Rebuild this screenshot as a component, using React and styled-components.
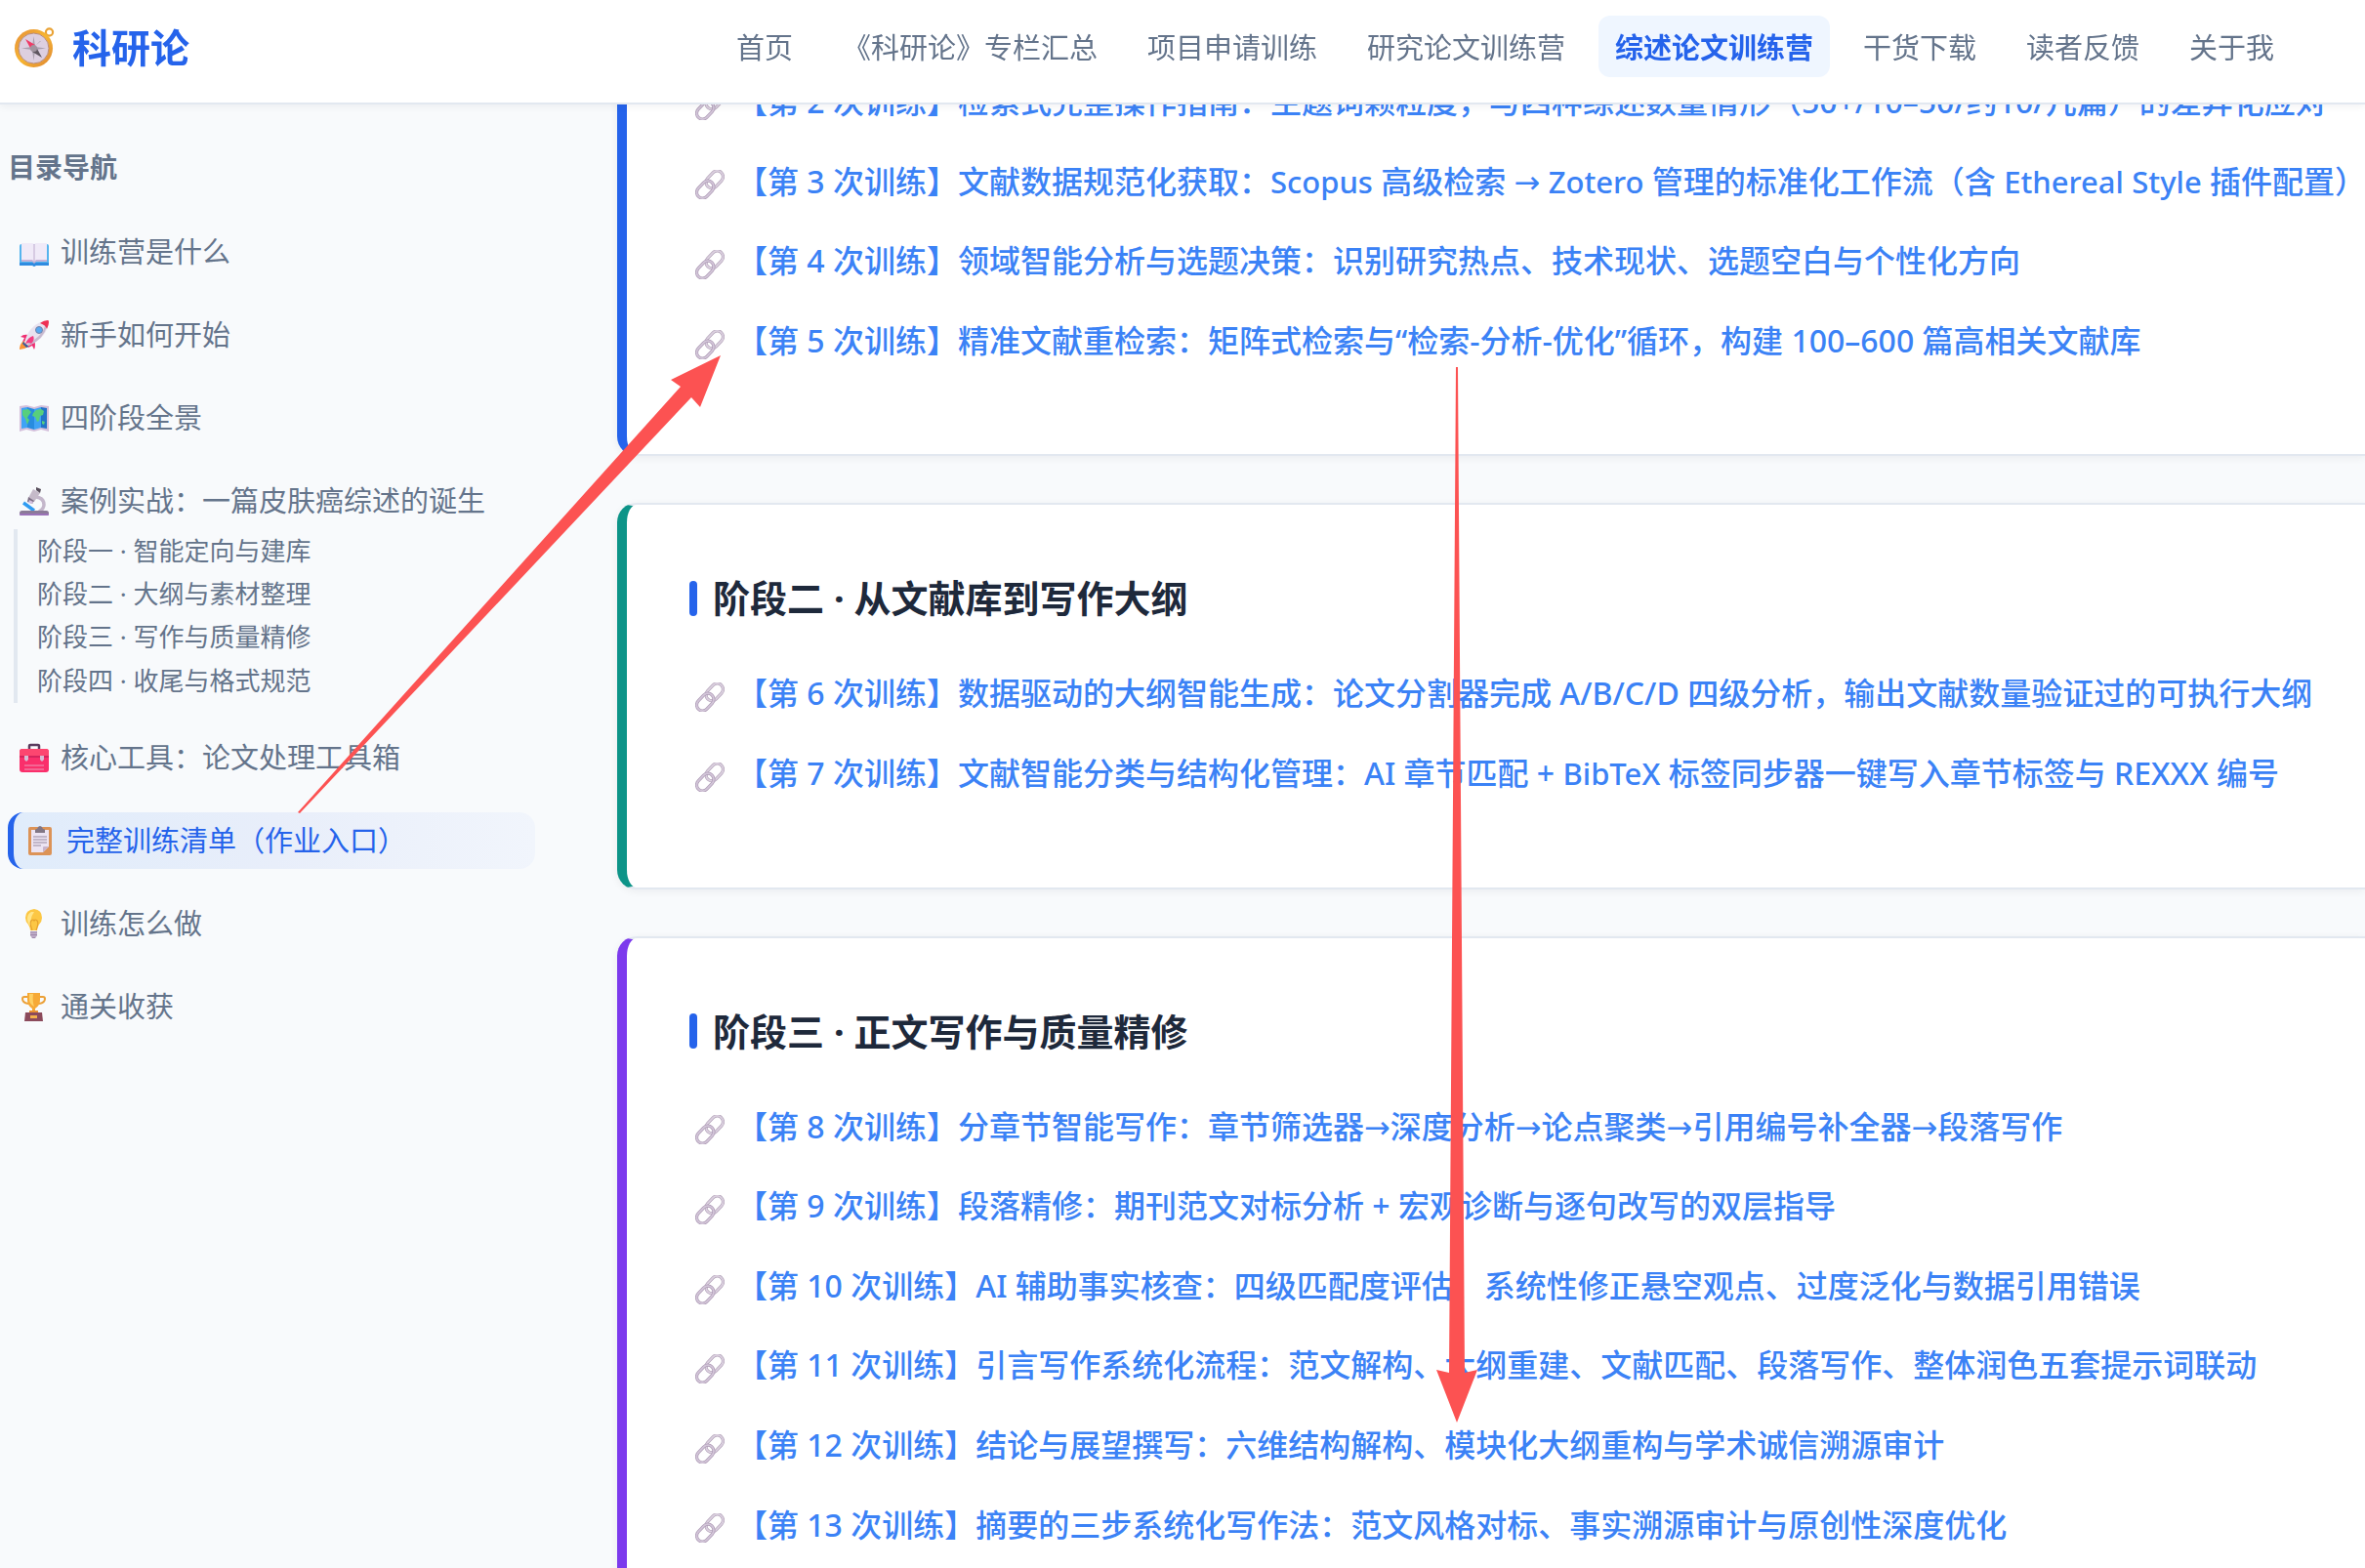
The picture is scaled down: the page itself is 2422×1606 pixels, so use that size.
import React from 'react';
import styled, { createGlobalStyle } from 'styled-components';

const GlobalStyle = createGlobalStyle`
  * {
    box-sizing: border-box;
  }

  body {
    margin: 0;
    background-color: #f8fafc;
    color: #64748b;
    font-family: 'Noto Sans', 'Noto Sans CJK SC', sans-serif;
  }

  a {
    color: inherit;
    text-decoration: none;
  }

  ul {
    list-style: none;
    margin: 0;
    padding: 0;
  }
`;

const Page = styled.div`
  position: relative;
  height: 100vh;
  overflow: hidden;
`;

const Header = styled.header`
  position: fixed;
  top: 0;
  left: 0;
  right: 0;
  z-index: 10;
  display: flex;
  justify-content: space-between;
  align-items: center;
  padding: 16px 76px 26px 14px;
  background-color: white;
  border-bottom: 2px solid #e2e8f0;
  box-shadow: 0 2px 8px rgba(15, 23, 42, 0.06);
`;

const Logo = styled.a`
  display: flex;
  align-items: center;
  gap: 18px;
  padding-top: 2px;
  font-size: 40px;
  line-height: 60px;
  font-weight: 700;
  color: #2563eb;
`;

const Nav = styled.nav`
  display: flex;
  gap: 17px;
`;

const NavLink = styled.a`
  padding: 9px 17px 7px;
  border-radius: 12px;
  font-size: 29px;
  line-height: 47px;
  font-weight: ${props => (props.$active ? 700 : 400)};
  color: ${props => (props.$active ? '#2563eb' : '#64748b')};
  background-color: ${props => (props.$active ? '#eff6ff' : 'transparent')};
`;

const Layout = styled.div`
  display: flex;
  align-items: flex-start;
  gap: 84px;
`;

const Sidebar = styled.aside`
  flex: 0 0 548px;
  padding: 147px 0 0 8px;
`;

const SidebarTitle = styled.h2`
  margin: 0 0 34px;
  font-size: 28px;
  line-height: 48px;
  font-weight: 700;
`;

const TocItem = styled.li`
  margin-bottom: 27px;
`;

const TocLink = styled.a`
  display: flex;
  align-items: center;
  gap: 12px;
  padding: 0 12px;
  font-size: 29px;
  line-height: 58px;
  border-radius: 16px;
  ${props => props.$active && `
    color: #2563eb;
    border-left: 6px solid #2563eb;
    background: linear-gradient(90deg, #e0ecfb, #e8eefa 50%, #f1f5fc);
  `}
`;

const SubList = styled.ul`
  margin-left: 6px;
  padding: 0 0 1px 20px;
  border-left: 4px solid #e2e8f0;
`;

const SubLink = styled.a`
  display: block;
  font-size: 26px;
  line-height: 1.7;
`;

const Main = styled.main`
  flex: 1;
  min-width: 0;
  display: flex;
  flex-direction: column;
  gap: 48px;
`;

const Card = styled.section`
  padding: ${props => (props.$continued ? '62px' : '64px')} 0 64px 64px;
  background-color: white;
  border: 2px solid #e2e8f0;
  border-left: 10px solid ${props => props.$accent};
  border-right: 0;
  border-radius: 20px 0 0 20px;
  box-shadow: 0 2px 8px rgba(15, 23, 42, 0.06);
`;

const CardTitle = styled.h3`
  display: flex;
  align-items: center;
  gap: 16px;
  margin: 0 0 26px;
  font-size: 38px;
  line-height: 63px;
  font-weight: 700;
  color: #1e293b;

  &::before {
    content: '';
    width: 8px;
    height: 36px;
    border-radius: 4px;
    background-color: #2563eb;
  }
`;

const TrainingList = styled.ul`
  margin-bottom: 11px;
`;

const TrainingItem = styled.li`
  display: flex;
  align-items: center;
  gap: 12px;
  padding: 11px 0 11px 6px;
  font-size: 32px;
  line-height: 1.8;
  white-space: nowrap;
`;

const TrainingLink = styled.a`
  padding-bottom: 2px;
  font-weight: 500;
  color: #3b82f6;
`;

const Arrow = styled.span`
  font-family: 'DejaVu Sans', sans-serif;
  font-weight: 400;
  line-height: 1;
`;

const Latin = styled.span`
  font-size: 31px;
  line-height: 1;
`;

const Icon = styled.svg`
  flex: none;
  width: ${props => props.$size || 30}px;
  height: ${props => props.$size || 30}px;
`;

const LinkMark = styled(Icon)`
  margin-top: 6px;
`;

const Annotations = styled.svg`
  position: absolute;
  top: 0;
  left: 0;
  z-index: 20;
  width: 2422px;
  height: 1606px;
  pointer-events: none;
`;

const CompassIcon = () => (
  <Icon $size={42} viewBox="0 0 42 42" aria-hidden="true">
    <defs>
      <linearGradient id="rim" x1="0" y1="0" x2="1" y2="1">
        <stop offset="0" stopColor="#e58f3a" />
        <stop offset="0.5" stopColor="#f7b531" />
        <stop offset="1" stopColor="#dd8433" />
      </linearGradient>
    </defs>
    <circle cx="36.500" cy="5" r="3.600" fill="none" stroke="#e9a336" strokeWidth="2.200" />
    <circle cx="20.500" cy="21.500" r="19.500" fill="url(#rim)" />
    <circle cx="20.500" cy="21.500" r="15.500" fill="#ddcfe0" stroke="#b98a78" strokeWidth="1" />
    <path d="M20.500 9l1.500 11 11 1.500-11 1.500-1.500 11-1.500-11-11-1.500 11-1.500z" fill="#a99fad" />
    <path d="M28 14l-6 5 5-5zM13 29l5-6-5 6z" fill="#a99fad" />
    <path d="M12 12l10 6-4 5z" fill="#ef3a66" />
    <path d="M29 31l-10-6 4-5z" fill="#5f5660" />
    <circle cx="20.500" cy="21.500" r="3.500" fill="#a0949f" />
  </Icon>
);

const BookIcon = () => (
  <Icon viewBox="0 0 30 30" aria-hidden="true">
    <path d="M0 9q0-2 2-2h26q2 0 2 2v19H17l-2 2-2-2H0z" fill="#55b4ee" />
    <path d="M0 26h30v3H17l-2 1-2-1H0z" fill="#2f8be0" />
    <path d="M2 6h11q2 0 2 2v18q0-2-2-2H2zM28 6H17q-2 0-2 2v18q0-2 2-2h11z" fill="#f0eaf8" />
    <path d="M2 23h11l2 2 2-2h11v2H17l-2 2-2-2H2z" fill="#c5b2d8" />
    <path d="M15 7v18" stroke="#cfc0dd" strokeWidth="1.500" />
  </Icon>
);

const RocketIcon = () => (
  <Icon viewBox="0 0 30 30" aria-hidden="true">
    <path d="M3 22q3-2 6 0t0 5q-4 3-9 3 0-5 3-8z" fill="#fb9436" />
    <path d="M4 22l6 5-3 1-4-4z" fill="#3f5a9c" />
    <path d="M9 15q-5-1-8 2l4 1-2 4 6-2zM15 21q2 4 0 9l-2-4-4 2 1-6z" fill="#ef2f72" />
    <path d="M5 23Q9 6 24 1l5 5q-3 13-20 20z" fill="#e9e2ef" />
    <path d="M28 6q-3 13-18 20l-2-2q15-7 18-18z" fill="#c8bacf" />
    <path d="M21 3q4-3 8-3 1 0 1 2 0 3-2 7-1-4-7-6z" fill="#ee3054" />
    <path d="M14 16q-5 1-8 8l4-1 2 1q4-4 2-8z" fill="#f43c82" />
    <circle cx="20" cy="10" r="3.500" fill="#58a9f0" stroke="#7582a8" strokeWidth="1" />
  </Icon>
);

const MapIcon = () => (
  <Icon viewBox="0 0 30 30" aria-hidden="true">
    <path d="M0 3l7-1 8 2 7-2 8 1v26l-8-2-7 2-8-2-7 2z" fill="#d4bfdb" />
    <path d="M2 5l6-1v21l-6 1z" fill="#3fa3f5" />
    <path d="M8 4l7 2v21l-7-2z" fill="#278cdf" />
    <path d="M15 6l7-2v21l-7 2z" fill="#3fa3f5" />
    <path d="M22 4l6 1v21l-6-1z" fill="#2374c8" />
    <path d="M3 7l6-1 3 3-3 4-1 2 2 2-2 5-2-6-3-4zM14 10l3-3 5-1 3 2-1 4-3 1-1 5-2 1-2-5-3-1zM23 18l3 1-1 3-2-1z" fill="#57cf7d" />
  </Icon>
);

const MicroscopeIcon = () => (
  <Icon viewBox="0 0 30 30" aria-hidden="true">
    <path d="M17 11q8 1 8 8 0 4-5 7" fill="none" stroke="#c4b7cb" strokeWidth="3.500" />
    <path d="M4 17l11 8" stroke="#2f9cf2" strokeWidth="3.500" />
    <rect x="0" y="25" width="30" height="5" rx="2.500" fill="#8b7a98" />
    <rect x="0" y="28" width="30" height="2" rx="1" fill="#9b72b8" />
    <path d="M14 3l7 4-6 9-6-4z" fill="#c5bac9" />
    <path d="M9 11l6 4-2 3-5-2z" fill="#7b6d84" />
    <path d="M10 14l4 2-1 2-4-1z" fill="#d3c0e0" />
    <path d="M17 1l5 2-1 4-4-3z" fill="#574e5b" />
  </Icon>
);

const ToolboxIcon = () => (
  <Icon viewBox="0 0 30 30" aria-hidden="true">
    <path d="M10 6V3q0-1 1-1h8q1 0 1 1v3" fill="none" stroke="#5b3b5e" strokeWidth="2.500" />
    <rect x="0" y="6" width="30" height="24" rx="3" fill="#fa2f6b" />
    <path d="M0 13V9q0-3 3-3h24q3 0 3 3v4z" fill="#fd4670" />
    <path d="M0 14h30" stroke="#c92258" strokeWidth="1.500" />
    <path d="M5 13h4v4l-2 2-2-2zM21 13h4v4l-2 2-2-2z" fill="#d7bdd5" />
    <path d="M5 23h20M5 27h20" stroke="#ee9bbb" strokeWidth="1.200" />
  </Icon>
);

const ClipboardIcon = () => (
  <Icon viewBox="0 0 30 30" aria-hidden="true">
    <rect x="3" y="1" width="24" height="29" rx="2" fill="#dc9357" />
    <path d="M6 4h18v17l-6 6H6z" fill="#ece4f3" />
    <path d="M24 21l-6 6v-5q0-1 1-1z" fill="#c8b3cc" />
    <path d="M10 7V4q0-1 2-1 1-3 3-3t3 3q2 0 2 1v3z" fill="#817685" />
    <path d="M8 11h14M8 14h14M8 17h14M8 20h8" stroke="#97889e" strokeWidth="1" />
  </Icon>
);

const BulbIcon = () => (
  <Icon viewBox="0 0 30 30" aria-hidden="true">
    <path d="M15 0q8 1 8 9 0 4-3 7-2 3-2 6h-7q0-3-2-6-3-3-3-7 0-8 9-9z" fill="#fcc744" />
    <path d="M12 3q-4 2-4 7t4 8q-2-8 3-15z" fill="#ffe589" />
    <path d="M13 22q-3-8-1-10t3 0q1-2 3 0t-1 10" fill="none" stroke="#e6a12c" strokeWidth="1.200" />
    <path d="M11 23h7v4l-2 3h-3l-2-3z" fill="#a18cad" />
    <path d="M11 25h7M12 28h5" stroke="#d7c6de" strokeWidth="1" />
  </Icon>
);

const TrophyIcon = () => (
  <Icon viewBox="0 0 30 30" aria-hidden="true">
    <path d="M8 5H5q-2 0-2 2 0 4 6 5M21 5h3q2 0 2 2 0 4-6 5" fill="none" stroke="#eba037" strokeWidth="2" />
    <path d="M8 1h13v7q0 6-5 9v4h-3v-4Q8 14 8 8z" fill="#f6a936" />
    <path d="M10 2h4q-1 8 1 13-5-3-5-7z" fill="#fed064" />
    <path d="M10 19h9v3h-9z" fill="#e99131" />
    <path d="M6 21h17l1 9H5z" fill="#8b4a5b" />
    <rect x="11" y="24" width="7" height="3" fill="#f4b04b" />
  </Icon>
);

const LinkIcon = () => (
  <LinkMark viewBox="0 0 30 30" aria-hidden="true">
    <g fill="none" transform="rotate(-47 15 15)">
      <rect x="12" y="9" width="20" height="12" rx="6" stroke="#b3a3b9" strokeWidth="3.200" />
      <rect x="12" y="9" width="20" height="12" rx="6" stroke="#dcd1e0" strokeWidth="1.800" />
      <rect x="-2" y="9" width="20" height="12" rx="6" stroke="#ad9ab5" strokeWidth="3.200" />
      <rect x="-2" y="9" width="20" height="12" rx="6" stroke="#d3c6d9" strokeWidth="1.800" />
    </g>
  </LinkMark>
);

const navItems = [
  '首页',
  '《科研论》专栏汇总',
  '项目申请训练',
  '研究论文训练营',
  '综述论文训练营',
  '干货下载',
  '读者反馈',
  '关于我',
];

const tocItems = [
  { label: '训练营是什么', icon: BookIcon },
  { label: '新手如何开始', icon: RocketIcon },
  { label: '四阶段全景', icon: MapIcon },
  {
    label: '案例实战：一篇皮肤癌综述的诞生',
    icon: MicroscopeIcon,
    children: [
      '阶段一 · 智能定向与建库',
      '阶段二 · 大纲与素材整理',
      '阶段三 · 写作与质量精修',
      '阶段四 · 收尾与格式规范',
    ],
  },
  { label: '核心工具：论文处理工具箱', icon: ToolboxIcon },
  { label: '完整训练清单（作业入口）', icon: ClipboardIcon, active: true },
  { label: '训练怎么做', icon: BulbIcon },
  { label: '通关收获', icon: TrophyIcon },
];

const stages = [
  {
    accent: '#2563eb',
    items: [
      '【第 2 次训练】检索式完整操作指南：主题词颗粒度，与四种综述数量情形（50+/10–50/约10/几篇）的差异化应对',
      '【第 3 次训练】文献数据规范化获取：Scopus 高级检索 → Zotero 管理的标准化工作流（含 Ethereal Style 插件配置）',
      '【第 4 次训练】领域智能分析与选题决策：识别研究热点、技术现状、选题空白与个性化方向',
      '【第 5 次训练】精准文献重检索：矩阵式检索与“检索-分析-优化”循环，构建 100–600 篇高相关文献库',
    ],
  },
  {
    title: '阶段二 · 从文献库到写作大纲',
    accent: '#0d9488',
    items: [
      '【第 6 次训练】数据驱动的大纲智能生成：论文分割器完成 A/B/C/D 四级分析，输出文献数量验证过的可执行大纲',
      '【第 7 次训练】文献智能分类与结构化管理：AI 章节匹配 + BibTeX 标签同步器一键写入章节标签与 REXXX 编号',
    ],
  },
  {
    title: '阶段三 · 正文写作与质量精修',
    accent: '#7c3aed',
    items: [
      '【第 8 次训练】分章节智能写作：章节筛选器→深度分析→论点聚类→引用编号补全器→段落写作',
      '【第 9 次训练】段落精修：期刊范文对标分析 + 宏观诊断与逐句改写的双层指导',
      '【第 10 次训练】AI 辅助事实核查：四级匹配度评估、系统性修正悬空观点、过度泛化与数据引用错误',
      '【第 11 次训练】引言写作系统化流程：范文解构、大纲重建、文献匹配、段落写作、整体润色五套提示词联动',
      '【第 12 次训练】结论与展望撰写：六维结构解构、模块化大纲重构与学术诚信溯源审计',
      '【第 13 次训练】摘要的三步系统化写作法：范文风格对标、事实溯源审计与原创性深度优化',
    ],
  },
];

// Noto's arrow and lowercase words are large next to the Chinese text,
// so arrows get their own face and words a slightly smaller size
const renderTitle = (text) =>
  text.split(/(→|[A-Za-z]*[a-z][A-Za-z]*)/).map((part, index) => {
    if (part === '→') {
      return <Arrow key={index}>{part}</Arrow>;
    }
    return index % 2 ? <Latin key={index}>{part}</Latin> : part;
  });

const App = () => {
  return (
    <Page>
      <GlobalStyle />
      <Header>
        <Logo href="#">
          <CompassIcon />
          科研论
        </Logo>
        <Nav>
          {navItems.map((item) => (
            <NavLink key={item} href="#" $active={item === '综述论文训练营'}>
              {item}
            </NavLink>
          ))}
        </Nav>
      </Header>

      <Layout>
        <Sidebar>
          <SidebarTitle>目录导航</SidebarTitle>
          <ul>
            {tocItems.map(({ label, icon: ItemIcon, active, children }) => (
              <TocItem key={label}>
                <TocLink href="#" $active={active}>
                  <ItemIcon />
                  {label}
                </TocLink>
                {children && (
                  <SubList>
                    {children.map((child) => (
                      <li key={child}>
                        <SubLink href="#">{child}</SubLink>
                      </li>
                    ))}
                  </SubList>
                )}
              </TocItem>
            ))}
          </ul>
        </Sidebar>

        <Main>
          {stages.map((stage) => (
            <Card key={stage.accent} $accent={stage.accent} $continued={!stage.title}>
              {stage.title && <CardTitle>{stage.title}</CardTitle>}
              <TrainingList>
                {stage.items.map((item) => (
                  <TrainingItem key={item}>
                    <LinkIcon />
                    <TrainingLink href="#">{renderTitle(item)}</TrainingLink>
                  </TrainingItem>
                ))}
              </TrainingList>
            </Card>
          ))}
        </Main>
      </Layout>

      <Annotations viewBox="0 0 2422 1606" fill="#fc5252" aria-hidden="true">
        <path d="M305 832L697 396L687 389L738 364L717 417L708 407L307 833z" />
        <path d="M1491 376h2L1500 1406L1513 1403L1492 1457L1471 1403L1484 1406z" />
      </Annotations>
    </Page>
  );
};

export default App;
